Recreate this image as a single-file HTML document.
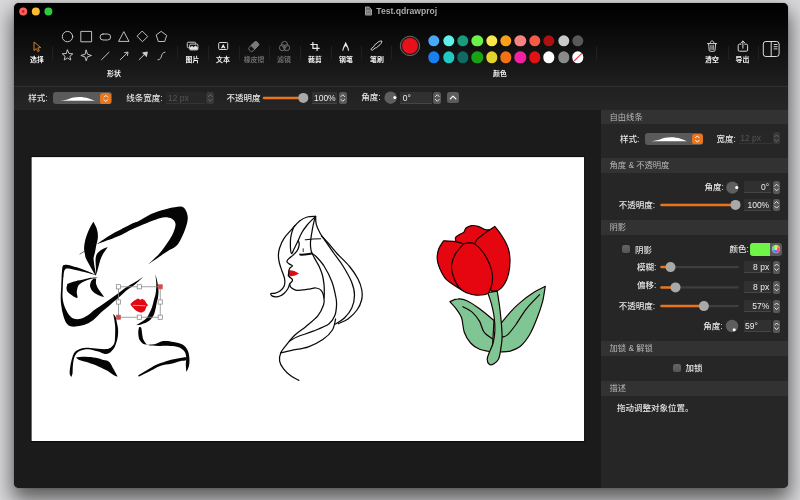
<!DOCTYPE html>
<html lang="zh-CN">
<head>
<meta charset="utf-8">
<title>Test.qdrawproj</title>
<style>
*{box-sizing:border-box;margin:0;padding:0}
html,body{width:800px;height:500px;overflow:hidden}
body{background:#d9d9db;font-family:"Liberation Sans","Noto Sans CJK SC",sans-serif;font-size:8px;color:#e6e6e6;position:relative}
.abs,.win *{position:absolute}
.win{position:absolute;left:14.3px;top:2.5px;width:773.8px;height:485.8px;border-radius:5px;background:#1b1b1b;overflow:hidden;
 box-shadow:0 10px 20px 2px rgba(0,0,0,.58),0 0 2px rgba(0,0,0,.25)}
/* coordinates inside .win are page coords shifted by (-14.5,-2.5); use wrapper to restore page coords */
.pg{left:-14.3px;top:-2.5px;width:800px;height:500px;will-change:transform}
.toolbar{left:0;top:0;width:800px;height:86px;background:linear-gradient(#000 0%,#030303 18%,#101010 55%,#1f1f1f 100%)}
.tbline{left:0;top:85.5px;width:800px;height:1px;background:#303030}
.optbar{left:0;top:86.5px;width:800px;height:23.5px;background:linear-gradient(#202020,#262626)}
.optline{left:0;top:109.5px;width:800px;height:1px;background:#111}
.canvasbg{left:0;top:110px;width:601.3px;height:390px;background:#1b1b1b}
.paper{left:32px;top:157.5px;width:552px;height:283.5px;background:#fff}
.panel{left:601.3px;top:110px;width:187px;height:380px;background:#262626}
.hdr{left:601.3px;width:187px;height:14.6px;background:#323232;color:#b8b8b8;font-size:8.3px;line-height:14.6px;padding-left:8.2px}
.lbl{font-size:8.5px;line-height:10px;white-space:nowrap;color:#e4e4e4;font-weight:500}
.tl{font-size:6.9px;line-height:9px;font-weight:bold;color:#f2f2f2;white-space:nowrap;transform:translateX(-50%)}
.tl.dim{color:#6d6d6d}
.sep{width:1px;height:14.5px;top:45.5px;background:#202020}
.dot{width:11.4px;height:11.4px;border-radius:50%;transform:translate(-50%,-50%)}
.field{height:12px;background:#303030;border-bottom:.8px solid #454545;color:#ececec;font-size:8.5px;line-height:13.8px;white-space:nowrap}
.field.r{width:27.6px;text-align:right;padding-right:2px}
.field.dis{color:#545454;background:#272727;border-color:#343434}
.stp{width:7.8px;height:12.5px;border-radius:2.6px;background:#585858}
.stp.dis{background:#383838}
.track{height:2.4px;border-radius:1px;background:#3c3c3c}
.fill{height:2.4px;border-radius:1px;background:#e8741c}
.knob{width:10px;height:10px;border-radius:50%;background:#a9a9a9;transform:translate(-50%,-50%)}
.dial{width:12px;height:12px;border-radius:50%;background:#5e5e5e;transform:translate(-50%,-50%)}
.cb{width:8.3px;height:8.3px;border-radius:2.2px;background:linear-gradient(#646464,#565656)}
.dd{height:12.2px;border-radius:3px;background:#5a5a5a}
.ddb{width:10.8px;height:10.6px;border-radius:2.6px;background:#e8761e}
svg{overflow:visible}
</style>
</head>
<body>
<div class="win"><div class="pg">
<div class="toolbar"></div>
<div class="tbline"></div>
<div class="optbar"></div>
<div class="optline"></div>
<div class="canvasbg"></div>
<div class="panel"></div>

<!-- TITLE -->
<div class="abs" style="left:376.3px;top:5.5px;font-size:8.6px;line-height:10px;font-weight:bold;color:#a9a9a9;white-space:nowrap">Test.qdrawproj</div>

<!-- TOOLBAR LABELS -->
<div class="tl" style="left:37px;top:54.5px">选择</div>
<div class="tl" style="left:114px;top:68.5px">形状</div>
<div class="tl" style="left:192.5px;top:54.5px">图片</div>
<div class="tl" style="left:223px;top:54.5px">文本</div>
<div class="tl dim" style="left:254px;top:54.5px">橡皮擦</div>
<div class="tl dim" style="left:284px;top:54.5px">滤镜</div>
<div class="tl" style="left:315px;top:54.5px">裁剪</div>
<div class="tl" style="left:346px;top:54.5px">钢笔</div>
<div class="tl" style="left:377px;top:54.5px">笔刷</div>
<div class="tl" style="left:500px;top:68.5px">颜色</div>
<div class="tl" style="left:712px;top:55px">清空</div>
<div class="tl" style="left:742.5px;top:55px">导出</div>

<div class="sep" style="left:52px"></div>
<div class="sep" style="left:176.5px"></div>
<div class="sep" style="left:208px"></div>
<div class="sep" style="left:238.5px"></div>
<div class="sep" style="left:268.5px"></div>
<div class="sep" style="left:299.5px"></div>
<div class="sep" style="left:330.5px"></div>
<div class="sep" style="left:361px"></div>
<div class="sep" style="left:391px"></div>
<div class="sep" style="left:596px"></div>
<div class="sep" style="left:727.5px"></div>
<div class="sep" style="left:758px"></div>

<!-- COLOR DOTS -->
<div class="dot" style="left:434.1px;top:41.1px;background:#4aa8f8"></div>
<div class="dot" style="left:434.1px;top:57.2px;background:#1a80f2"></div>
<div class="dot" style="left:448.5px;top:41.1px;background:#5ef0ea"></div>
<div class="dot" style="left:448.5px;top:57.2px;background:#20c9c2"></div>
<div class="dot" style="left:462.9px;top:41.1px;background:#1b9b7d"></div>
<div class="dot" style="left:462.9px;top:57.2px;background:#0f6a62"></div>
<div class="dot" style="left:477.2px;top:41.1px;background:#6cf04a"></div>
<div class="dot" style="left:477.2px;top:57.2px;background:#18a316"></div>
<div class="dot" style="left:491.6px;top:41.1px;background:#fbe84e"></div>
<div class="dot" style="left:491.6px;top:57.2px;background:#e2d22e"></div>
<div class="dot" style="left:506.0px;top:41.1px;background:#f8a01c"></div>
<div class="dot" style="left:506.0px;top:57.2px;background:#f07210"></div>
<div class="dot" style="left:520.4px;top:41.1px;background:#f88282"></div>
<div class="dot" style="left:520.4px;top:57.2px;background:#f220a2"></div>
<div class="dot" style="left:534.8px;top:41.1px;background:#f85a48"></div>
<div class="dot" style="left:534.8px;top:57.2px;background:#e01214"></div>
<div class="dot" style="left:549.1px;top:41.1px;background:#b00f12"></div>
<div class="dot" style="left:549.1px;top:57.2px;background:#ffffff"></div>
<div class="dot" style="left:563.5px;top:41.1px;background:#c9c9c9"></div>
<div class="dot" style="left:563.5px;top:57.2px;background:#8a8a8a"></div>
<div class="dot" style="left:577.9px;top:41.1px;background:#585858"></div>
<div class="dot" style="left:577.9px;top:57.2px;background:#ffffff"></div>

<!-- OPTIONS BAR -->
<div class="lbl" style="left:28.2px;top:93.3px">样式:</div>
<div class="dd" style="left:53.2px;top:92.2px;width:58.6px"></div>
<div class="ddb" style="left:100.4px;top:93px"></div>
<div class="lbl" style="left:126.2px;top:93.3px">线条宽度:</div>
<div class="field dis" style="left:166px;top:92px;width:39px;padding-left:2px">12 px</div>
<div class="stp dis" style="left:206.4px;top:91.7px"></div>
<div class="lbl" style="left:226.600px;top:93.3px">不透明度</div>
<div class="field" style="left:312.300px;top:92px;width:25px;text-align:center">100%</div>
<div class="stp" style="left:338.900px;top:91.7px"></div>
<div class="lbl" style="left:361.200px;top:92.300px">角度:</div>
<div class="field" style="left:400px;top:92px;width:32px;padding-left:2.800px">0°</div>
<div class="stp" style="left:433.400px;top:91.700px"></div>
<div class="abs" style="left:447.300px;top:91.800px;width:11.500px;height:11.400px;border-radius:2.500px;background:#5c5c5c"></div>

<!-- RIGHT PANEL -->
<div class="hdr" style="top:109.900px">自由线条</div>
<div class="lbl" style="left:620px;top:133.700px">样式:</div>
<div class="dd" style="left:645px;top:132.800px;width:58.300px"></div>
<div class="ddb" style="left:691.900px;top:133.600px"></div>
<div class="lbl" style="left:716.500px;top:133.700px">宽度:</div>
<div class="field dis" style="left:738.500px;top:132.400px;width:33px;padding-left:1.700px">12 px</div>
<div class="stp dis" style="left:772.700px;top:131.900px"></div>

<div class="hdr" style="top:158.200px">角度 &amp; 不透明度</div>
<div class="lbl" style="left:704.500px;top:182.300px">角度:</div>
<div class="field r" style="left:743.600px;top:181.200px">0°</div>
<div class="stp" style="left:772.700px;top:181.200px"></div>
<div class="lbl" style="left:618.800px;top:200.400px">不透明度:</div>
<div class="field r" style="left:743.600px;top:198.800px">100%</div>
<div class="stp" style="left:772.700px;top:198.500px"></div>

<div class="hdr" style="top:220.100px">阴影</div>
<div class="cb" style="left:622px;top:245.200px"></div>
<div class="lbl" style="left:635px;top:244.500px">阴影</div>
<div class="lbl" style="left:729.600px;top:244.400px">颜色:</div>
<div class="abs" style="left:750.400px;top:243px;width:31.600px;height:12.600px;border-radius:3px;background:#5a5a5a"></div>
<div class="abs" style="left:750.400px;top:243px;width:19.300px;height:12.600px;border-radius:3px 0 0 3px;background:#6ef548"></div>
<div class="abs" style="left:775.700px;top:249.300px;width:7px;height:7px;border-radius:50%;transform:translate(-50%,-50%);background:conic-gradient(from 90deg,#ff3b3b,#ff3bd8,#7a4bff,#3b9bff,#3bf0d0,#5bff4b,#f4ff3b,#ffa03b,#ff3b3b);box-shadow:0 0 0 .7px #d8d8d8"></div>
<div class="abs" style="left:775.700px;top:249.300px;width:3px;height:3px;border-radius:50%;transform:translate(-50%,-50%);background:radial-gradient(#fff,rgba(255,255,255,0))"></div>

<div class="lbl" style="left:637px;top:262.300px">模糊:</div>
<div class="field r" style="left:743.600px;top:261px">8 px</div>
<div class="stp" style="left:772.700px;top:261px"></div>

<div class="lbl" style="left:637px;top:280.200px">偏移:</div>
<div class="field r" style="left:743.600px;top:281.300px">8 px</div>
<div class="stp" style="left:772.700px;top:281.200px"></div>

<div class="lbl" style="left:618.800px;top:300.700px">不透明度:</div>
<div class="field r" style="left:743.600px;top:300px">57%</div>
<div class="stp" style="left:772.700px;top:300px"></div>

<div class="lbl" style="left:703.300px;top:320.800px">角度:</div>
<div class="field" style="left:743.600px;top:320px;width:27.600px;padding-left:1.500px">59°</div>
<div class="stp" style="left:772.700px;top:320px"></div>

<div class="hdr" style="top:341.200px">加锁 &amp; 解锁</div>
<div class="cb" style="left:673px;top:363.900px"></div>
<div class="lbl" style="left:685.500px;top:363.300px">加锁</div>
<div class="hdr" style="top:381px">描述</div>
<div class="lbl" style="left:617px;top:402.900px">拖动调整对象位置。</div>

<!-- ICONS + DRAWINGS -->
<svg class="abs" style="left:0;top:0" width="800" height="500" viewBox="0 0 800 500" id="art">
<!--ICONS-->
<!-- traffic lights -->
<circle cx="23.2" cy="11.5" r="4" fill="#f8605a"/><circle cx="23.2" cy="11.5" r="1.2" fill="#c01818"/>
<circle cx="35.8" cy="11.5" r="4" fill="#fabc30"/>
<circle cx="48.4" cy="11.5" r="4" fill="#30c840"/>
<!-- doc icon -->
<g fill="none" stroke="#a0a0a0" stroke-width="1"><path d="M365.5 7h3.6l2.4 2.4v5.6h-6z" fill="#6a6a6a"/><rect x="367" y="10.5" width="3" height="3" stroke-width=".7"/></g>
<!-- select cursor -->
<path d="M34 42v8.6l2.3-2 1.5 3 1.5-.7-1.5-3 3-.3z" fill="none" stroke="#e08a30" stroke-width=".9" stroke-linejoin="round"/>
<!-- shapes -->
<g fill="none" stroke="#d4d4d4" stroke-width=".9" stroke-linejoin="round" stroke-linecap="round">
<circle cx="67.5" cy="36.6" r="5.2"/>
<rect x="81.2" y="31.4" width="10.4" height="10.4"/>
<rect x="100" y="34" width="10.6" height="6" rx="3"/>
<path d="M124 32l5 9.4h-10z"/>
<path d="M142.5 31.3l5.2 5.2-5.2 5.2-5.2-5.2z"/>
<path d="M161.5 31.6l5.2 3.8-2 6.1h-6.4l-2-6.1z"/>
<path d="M67.5 50l1.5 3.5 3.8.3-2.9 2.5.9 3.7-3.3-2-3.3 2 .9-3.7-2.900-2.500 3.800-.300z"/>
<path d="M86.200 50.200l1.300 4 4 1.300-4 1.300-1.300 4-1.300-4-4-1.300 4-1.300z"/>
<path d="M101.600 59.600l7.400-7.300"/>
<path d="M120.400 59.600l7.400-7.300m-3.200.3l3.400-.5-.5 3.400"/>
<path d="M139.200 59.600l5.500-5.400"/>
<path d="M143 52.800l4.300-.8-.8 4.300z" fill="#d4d4d4"/>
<path d="M158 59.800c5 0 2-7.600 7-7.600"/>
</g>

<!-- image icon -->
<g fill="none" stroke="#e4e4e4" stroke-width=".9" stroke-linejoin="round">
<path d="M189.300 47.800h-.8a1.200 1.200 0 0 1-1.200-1.200v-3.200a1.200 1.200 0 0 1 1.200-1.200h6a1.200 1.200 0 0 1 1.200 1.200v.6"/>
<rect x="189.600" y="44.100" width="8.300" height="5.800" rx="1.200"/>
<path d="M190 49.600v-2.200l2-1.300 1.600 1.100 1.800-1.500 2.200 1.900v2z" fill="#e4e4e4" stroke-width=".4"/>
</g>
<!-- text icon -->
<rect x="218.700" y="42.500" width="9" height="7" rx="1.100" fill="none" stroke="#e4e4e4" stroke-width=".95"/>
<path d="M223.200 44.100l2.300 4.200h-1.300l-1-1.100-1 1.100h-1.300z" fill="#f0f0f0"/>
<!-- eraser -->
<g transform="rotate(-45 253.700 46.600)" stroke="#7a7a7a" stroke-width=".9" fill="none">
<rect x="248.200" y="44" width="11" height="5.200" rx="2"/>
<path d="M252.500 44h4.700a2 2 0 0 1 2 2v1.200a2 2 0 0 1-2 2h-4.700z" fill="#7a7a7a"/>
</g>
<!-- filter -->
<g fill="none" stroke="#7a7a7a" stroke-width=".9">
<circle cx="284.500" cy="44.400" r="3"/><circle cx="282.400" cy="47.700" r="3"/><circle cx="286.600" cy="47.700" r="3"/>
</g>
<!-- crop -->
<g fill="none" stroke="#e8e8e8" stroke-width="1.200">
<path d="M312.900 42v6.400h6.700"/><path d="M310.300 44.500h6.800v6.400"/>
</g>
<!-- pen -->
<path d="M345.700 41.700l2 4.300c.7 1.500 1.200 3 1.400 4.700h-1.100c-.3-2.200-1.100-3.800-2.300-4.600c-1.200.800-2 2.400-2.300 4.600h-1.100c.2-1.700.7-3.200 1.400-4.700z" fill="#e8e8e8"/>
<!-- brush -->
<g transform="rotate(-40 376.200 45.800)" fill="none" stroke="#e4e4e4" stroke-width=".85" stroke-linejoin="round">
<path d="M369.800 45.800c0-.7.300-1 1-1h3.200l1-.6h5c1.600 0 2.800.8 3.600 1.600c-.8.800-2 1.600-3.600 1.600h-5l-1-.6h-3.200c-.7 0-1-.3-1-1z"/>
</g>
<!-- big red -->
<circle cx="410" cy="45.900" r="9.700" fill="#1e1e1e" stroke="#8c8c8c" stroke-width=".7"/>
<circle cx="410" cy="45.900" r="7.900" fill="#e8111b"/>
<!-- no-color slash -->
<path d="M574.200 61l7.600-7.600" stroke="#e8485a" stroke-width="1.300" fill="none"/>
<!-- trash -->
<g fill="none" stroke="#e4e4e4" stroke-width=".9" stroke-linecap="round" stroke-linejoin="round">
<path d="M707.500 43.600h9.200"/><path d="M710.300 43.400c0-1.600.5-2.400 1.800-2.400s1.800.8 1.800 2.400"/>
<path d="M708.600 43.800l.6 6.500c.1.700.5 1 1.200 1h3.400c.7 0 1.100-.3 1.200-1l.6-6.500"/>
<path d="M710.800 45.500v4m1.300-4v4m1.300-4v4" stroke-width=".7"/>
</g>
<!-- export -->
<g fill="none" stroke="#e4e4e4" stroke-width=".95" stroke-linecap="round" stroke-linejoin="round">
<path d="M741 44.200h-1.600a1.200 1.200 0 0 0-1.200 1.200v4.600a1.200 1.200 0 0 0 1.200 1.200h7a1.200 1.200 0 0 0 1.200-1.200v-4.600a1.200 1.200 0 0 0-1.200-1.200h-1.600"/>
<path d="M742.900 48.200v-7m-2 1.800l2-2 2 2"/>
</g>
<!-- sidebar -->
<g fill="none" stroke="#e4e4e4" stroke-width=".95">
<rect x="763.300" y="41.500" width="15.800" height="15" rx="2.600"/><path d="M771.200 41.500v15"/>
<path d="M773.700 44.500h3.800m-3.800 2.200h3.800m-3.800 2.200h3.800" stroke-width=".9"/>
</g>
<!-- controls -->
<path d="M264.0 97.9H306.5" stroke="#3e3e3e" stroke-width="2.400" stroke-linecap="round" fill="none"/>
<path d="M264.0 97.9H303.3" stroke="#e8751d" stroke-width="2.500" stroke-linecap="round" fill="none"/>
<path d="M661.5 204.9H737.6" stroke="#3e3e3e" stroke-width="2.400" stroke-linecap="round" fill="none"/>
<path d="M661.5 204.9H735.5" stroke="#e8751d" stroke-width="2.500" stroke-linecap="round" fill="none"/>
<path d="M661.5 267.1H737.6" stroke="#3e3e3e" stroke-width="2.400" stroke-linecap="round" fill="none"/>
<path d="M661.5 267.1H670.5" stroke="#e8751d" stroke-width="2.500" stroke-linecap="round" fill="none"/>
<path d="M661.5 287.4H737.6" stroke="#3e3e3e" stroke-width="2.400" stroke-linecap="round" fill="none"/>
<path d="M661.5 287.4H675.5" stroke="#e8751d" stroke-width="2.500" stroke-linecap="round" fill="none"/>
<path d="M661.5 306.1H737.6" stroke="#3e3e3e" stroke-width="2.400" stroke-linecap="round" fill="none"/>
<path d="M661.5 306.1H703.9" stroke="#e8751d" stroke-width="2.500" stroke-linecap="round" fill="none"/>
<path d="M208.4 96.6l1.900-1.900 1.900 1.900M208.4 99.4l1.900 1.900 1.900-1.900" fill="none" stroke="#6c6c6c" stroke-width=".9" stroke-linecap="round" stroke-linejoin="round"/>
<path d="M340.9 96.6l1.900-1.900 1.900 1.900M340.9 99.4l1.900 1.900 1.900-1.900" fill="none" stroke="#f0f0f0" stroke-width=".9" stroke-linecap="round" stroke-linejoin="round"/>
<path d="M435.4 96.6l1.900-1.900 1.900 1.900M435.4 99.4l1.900 1.900 1.900-1.900" fill="none" stroke="#f0f0f0" stroke-width=".9" stroke-linecap="round" stroke-linejoin="round"/>
<path d="M774.7 136.8l1.900-1.900 1.900 1.900M774.7 139.6l1.900 1.900 1.900-1.900" fill="none" stroke="#6c6c6c" stroke-width=".9" stroke-linecap="round" stroke-linejoin="round"/>
<path d="M774.7 186.1l1.900-1.900 1.900 1.900M774.7 188.9l1.900 1.900 1.900-1.900" fill="none" stroke="#f0f0f0" stroke-width=".9" stroke-linecap="round" stroke-linejoin="round"/>
<path d="M774.7 203.4l1.900-1.900 1.900 1.900M774.7 206.2l1.900 1.900 1.900-1.900" fill="none" stroke="#f0f0f0" stroke-width=".9" stroke-linecap="round" stroke-linejoin="round"/>
<path d="M774.7 265.9l1.900-1.900 1.900 1.900M774.7 268.7l1.900 1.900 1.900-1.900" fill="none" stroke="#f0f0f0" stroke-width=".9" stroke-linecap="round" stroke-linejoin="round"/>
<path d="M774.7 286.1l1.900-1.900 1.900 1.900M774.7 288.9l1.900 1.900 1.900-1.900" fill="none" stroke="#f0f0f0" stroke-width=".9" stroke-linecap="round" stroke-linejoin="round"/>
<path d="M774.7 304.9l1.900-1.900 1.900 1.900M774.7 307.7l1.900 1.900 1.900-1.900" fill="none" stroke="#f0f0f0" stroke-width=".9" stroke-linecap="round" stroke-linejoin="round"/>
<path d="M774.7 324.9l1.900-1.900 1.900 1.900M774.7 327.7l1.900 1.900 1.900-1.900" fill="none" stroke="#f0f0f0" stroke-width=".9" stroke-linecap="round" stroke-linejoin="round"/>
<path d="M104.0 97.1l1.800-1.800 1.800 1.800M104.0 99.7l1.800 1.800 1.800-1.800" fill="none" stroke="#fff" stroke-width=".95" stroke-linecap="round" stroke-linejoin="round"/>
<path d="M695.5 137.7l1.800-1.800 1.800 1.800M695.5 140.3l1.800 1.800 1.800-1.800" fill="none" stroke="#fff" stroke-width=".95" stroke-linecap="round" stroke-linejoin="round"/>
<path d="M59.8 100.8C68.8 100.2 70.0 96.9 79.0 96.9C87.0 96.9 90.2 99.2 95.2 100.8z" fill="#fff"/>
<path d="M651.5 141.2C660.5 140.6 661.8 137.3 670.8 137.3C678.8 137.3 682.0 139.6 687.0 141.2z" fill="#fff"/>
<circle cx="303.300" cy="97.9" r="5" fill="#a9a9a9"/>
<circle cx="735.500" cy="204.900" r="5" fill="#a9a9a9"/>
<circle cx="670.500" cy="267.100" r="5" fill="#a9a9a9"/>
<circle cx="675.500" cy="287.400" r="5" fill="#a9a9a9"/>
<circle cx="703.900" cy="306.100" r="5" fill="#a9a9a9"/>
<circle cx="390.600" cy="97.700" r="6.200" fill="#5e5e5e"/>
<circle cx="732.400" cy="187.600" r="6.200" fill="#5e5e5e"/>
<circle cx="732" cy="326" r="6.200" fill="#5e5e5e"/>
<circle cx="394.800" cy="97.600" r="1.500" fill="#fff"/>
<circle cx="736.700" cy="187.600" r="1.500" fill="#fff"/>
<circle cx="734.200" cy="329.700" r="1.500" fill="#fff"/>
<path d="M450.300 98.900l2.750-2.750 2.750 2.750" fill="none" stroke="#fff" stroke-width="1.200" stroke-linecap="round" stroke-linejoin="round"/>
<!--/ICONS-->
<rect x="30.700" y="156.200" width="554.300" height="285.900" fill="#0c0c0c"/>
<rect x="31.600" y="157.100" width="552.450" height="283.900" fill="#fff"/>
<!--ART-->
<g id="tulip">
<path d="M545.3 286.3C543.3 287.3 537.9 289.7 533.6 292.6C529.2 295.4 523.2 299.9 519.2 303.4C515.1 306.8 512.3 310.0 509.3 313.3C506.3 316.6 502.5 321.5 501.2 323.2C501.0 328.0 500.4 347.2 500.3 352.0C501.9 351.8 506.7 352.1 510.2 351.1C513.6 350.0 517.7 348.5 521.0 345.7C524.3 342.8 527.3 338.6 530.0 334.0C532.7 329.3 535.1 323.2 537.2 317.8C539.3 312.4 541.2 306.8 542.6 301.6C543.9 296.3 544.8 288.8 545.3 286.3z" fill="#7fc694" stroke="#150101" stroke-width="1.2" stroke-linejoin="round"/>
<path d="M539.9 294.4C537.6 296.8 530.4 303.7 526.4 308.8C522.3 313.9 518.7 320.6 515.6 325.0C512.4 329.3 509.7 332.9 507.5 334.9C505.2 336.9 503.0 336.8 502.1 337.2" fill="none" stroke="#150101" stroke-width="1.2" stroke-linejoin="round"/>
<path d="M449.9 301.6C451.2 301.1 455.1 299.0 458.0 298.9C460.8 298.7 463.4 299.0 467.0 300.7C470.6 302.3 475.1 305.5 479.6 308.8C484.1 312.1 491.6 318.5 494.0 320.5C493.7 325.7 492.5 346.7 492.2 352.0C490.1 351.5 483.2 350.8 479.6 349.3C476.0 347.8 473.1 345.8 470.6 343.0C468.0 340.1 465.8 336.4 464.3 332.2C462.8 328.0 462.9 321.7 461.6 317.8C460.2 313.9 458.1 311.5 456.2 308.8C454.2 306.1 450.9 302.8 449.9 301.6z" fill="#7fc694" stroke="#150101" stroke-width="1.2" stroke-linejoin="round"/>
<path d="M462.5 306.6C464.1 307.6 469.5 309.9 472.4 312.4C475.2 314.9 477.6 318.1 479.6 321.4C481.5 324.7 481.8 329.2 484.1 332.2C486.3 335.2 491.6 338.2 493.1 339.4" fill="none" stroke="#150101" stroke-width="1.2" stroke-linejoin="round"/>
<path d="M487.7 292.6C488.3 294.4 490.2 299.5 491.3 303.4C492.3 307.3 493.4 311.5 494.0 316.0C494.6 320.5 495.0 325.9 494.9 330.4C494.7 334.9 494.0 339.4 493.1 343.0C492.2 346.6 490.5 349.3 489.5 352.0C488.5 354.7 487.2 357.1 487.2 359.2C487.2 361.3 488.4 363.8 489.5 364.6C490.6 365.3 492.5 364.6 494.0 363.7C495.5 362.8 497.4 361.1 498.5 359.2C499.5 357.2 499.7 355.6 500.3 352.0C500.9 348.4 501.9 342.7 502.1 337.6C502.2 332.5 501.6 326.8 501.2 321.4C500.7 316.0 500.1 310.2 499.4 305.2C498.7 300.2 497.6 293.5 497.2 291.2C495.6 291.4 489.3 292.4 487.7 292.6z" fill="#7fc694" stroke="#150101" stroke-width="1.2" stroke-linejoin="round"/>
<path d="M455.6 240.0C455.6 239.5 454.9 238.2 455.6 237.3C456.3 236.3 458.2 235.3 459.6 234.4C461.0 233.5 462.9 233.2 463.9 232.2C465.0 231.1 464.7 229.1 466.0 228.0C467.3 226.9 469.6 225.9 471.6 225.6C473.6 225.3 475.7 225.7 478.0 226.4C480.3 227.1 483.2 229.0 485.2 229.6C487.2 230.2 489.2 229.9 490.0 229.9C488.0 232.5 483.2 243.0 478.0 245.6C472.8 248.2 462.5 246.5 458.8 245.6C455.1 244.7 456.1 240.9 455.6 240.0z" fill="#e6060f" stroke="#150101" stroke-width="1.2" stroke-linejoin="round"/>
<path d="M443.6 240.8C442.8 242.1 439.9 245.9 438.8 248.8C437.7 251.7 437.1 255.2 437.2 258.4C437.3 261.6 438.1 264.5 439.6 268.0C441.1 271.5 443.1 276.0 446.0 279.2C448.9 282.4 453.7 284.9 457.2 287.2C460.7 289.5 465.2 291.9 466.8 292.8C468.7 288.7 478.4 276.1 478.0 268.0C477.6 259.9 466.7 248.0 464.4 244.0C462.9 243.6 459.1 242.1 455.6 241.6C452.1 241.1 445.6 240.9 443.6 240.8z" fill="#e6060f" stroke="#150101" stroke-width="1.2" stroke-linejoin="round"/>
<path d="M494.8 226.4C496.0 228.0 499.7 232.3 502.0 236.0C504.3 239.7 507.1 244.5 508.4 248.8C509.7 253.1 510.0 257.3 510.0 261.6C510.0 265.9 509.3 270.7 508.4 274.4C507.5 278.1 506.0 281.4 504.4 284.0C502.8 286.6 500.9 288.9 498.8 290.1C496.7 291.3 492.8 291.0 491.6 291.2C489.3 287.3 480.8 275.9 478.0 268.0C475.2 260.1 475.3 248.0 474.8 244.0C475.2 243.2 475.6 240.9 477.2 239.2C478.8 237.5 481.5 235.7 484.4 233.6C487.3 231.5 493.1 227.6 494.8 226.4z" fill="#e6060f" stroke="#150101" stroke-width="1.2" stroke-linejoin="round"/>
<path d="M463.9 243.7C464.8 243.5 467.4 242.8 469.2 242.9C471.0 242.9 472.5 242.5 474.8 244.0C477.1 245.5 480.4 248.8 482.8 252.0C485.2 255.2 487.6 259.5 489.2 263.2C490.8 266.9 492.0 270.7 492.4 274.4C492.8 278.1 492.4 282.4 491.6 285.6C490.8 288.8 490.1 292.0 487.6 293.6C485.1 295.2 479.9 295.3 476.4 295.2C472.9 295.1 469.7 294.1 466.8 292.8C463.9 291.5 461.1 290.0 458.8 287.2C456.5 284.4 454.4 279.7 453.2 276.0C452.0 272.3 451.2 268.5 451.6 264.8C452.0 261.1 453.5 257.1 455.6 253.6C457.7 250.1 462.5 245.3 463.9 243.7z" fill="#e6060f" stroke="#150101" stroke-width="1.2" stroke-linejoin="round"/>
</g>

<path d="M289.200 270.200C292 270 295.500 271 299.100 273.600C296 275.600 292.500 276.500 289.200 276.100C288.500 274.500 288.500 272 289.200 270.200z" fill="#e00a14"/>
<g id="girl" fill="none" stroke="#0a0a0a" stroke-linecap="round" stroke-linejoin="round">
<path d="M315.6 216.4C314.2 216.5 309.9 216.2 307.2 217.0C304.5 217.8 302.2 218.9 299.6 220.9C297.1 222.9 294.5 226.3 291.9 229.2C289.3 232.1 286.2 235.1 284.2 238.2C282.1 241.3 280.6 245.0 279.6 248.0C278.6 251.0 278.4 253.5 278.4 256.0C278.4 258.5 278.8 260.5 279.4 263.0C280.0 265.5 281.1 268.3 282.0 271.0C282.9 273.7 284.2 276.5 284.6 279.0C285.0 281.5 285.0 284.0 284.2 286.0C283.4 288.0 281.6 289.8 280.0 291.0C278.4 292.2 276.0 292.9 274.5 293.3C273.0 293.7 271.5 293.2 271.0 293.6C270.5 294.0 270.9 295.1 271.6 295.6C272.4 296.1 274.1 296.7 275.5 296.8C276.9 296.9 278.5 296.6 280.0 296.0C281.5 295.4 283.2 294.2 284.5 293.0C285.8 291.8 287.1 290.0 288.0 288.5C288.9 287.0 289.3 284.8 289.6 284.0" stroke-width="1.25"/>
<path d="M315.6 216.4C314.2 217.8 309.5 222.2 307.2 225.0C304.9 227.8 303.2 230.2 301.6 233.0C300.0 235.8 298.9 239.1 297.6 241.8C296.3 244.5 295.0 247.0 294.0 249.0C293.0 251.0 292.2 254.0 291.6 253.6C291.0 253.2 290.5 249.4 290.4 246.6C290.3 243.8 290.3 240.1 290.8 237.0C291.3 233.9 292.5 230.1 293.2 228.2C293.9 226.3 294.7 226.0 295.0 225.6" stroke-width="1.25"/>
<path d="M298.3 240.6C298.4 241.1 299.1 242.5 299.2 243.5C299.3 244.5 299.1 245.4 298.8 246.6C298.5 247.8 298.2 249.1 297.2 250.6C296.2 252.1 294.2 254.1 292.8 255.4C291.4 256.7 289.8 257.6 288.8 258.6C287.8 259.6 286.9 260.5 286.9 261.4C286.9 262.2 288.0 263.0 288.9 263.7C289.8 264.4 292.3 265.1 292.5 265.8C292.7 266.5 290.6 267.1 290.0 267.9C289.4 268.7 289.1 269.6 288.9 270.5C288.7 271.4 288.7 272.7 288.6 273.6C288.5 274.5 288.2 275.1 288.4 275.7C288.6 276.3 289.6 276.9 289.8 277.2" stroke-width="1.25"/>
<path d="M289.8 277.2C290.2 277.6 292.0 278.8 292.4 279.5C292.8 280.2 292.4 280.7 292.0 281.4C291.6 282.1 290.2 283.1 289.9 283.8C289.6 284.5 289.8 284.9 290.0 285.5C290.2 286.1 290.1 286.8 291.2 287.6C292.3 288.4 294.0 290.0 296.8 290.3C299.6 290.6 304.8 289.6 308.0 289.2C311.2 288.8 313.7 287.7 316.0 288.0C318.3 288.3 320.3 289.1 321.6 290.8C322.9 292.5 323.7 295.6 324.0 298.0C324.3 300.4 324.5 302.1 323.5 305.0C322.5 307.9 320.9 312.0 318.0 315.6C315.1 319.2 309.8 323.2 306.0 326.4C302.2 329.6 298.4 331.8 295.2 334.8C292.0 337.8 289.2 341.4 286.8 344.4C284.4 347.4 282.0 350.0 280.8 352.8C279.6 355.6 279.2 358.6 279.6 361.2C280.0 363.8 281.4 366.0 283.2 368.4C285.0 370.8 287.8 373.6 290.4 375.6C293.0 377.6 297.4 379.6 298.8 380.4" stroke-width="1.25"/>
<path d="M314.9 217.7C314.5 219.6 313.1 225.1 312.4 229.2C311.7 233.2 310.7 238.5 310.5 242.0C310.3 245.5 310.6 247.9 311.0 250.0C311.4 252.1 311.9 252.9 312.8 254.8C313.7 256.7 315.1 259.2 316.2 261.2C317.3 263.2 318.4 264.7 319.4 267.0C320.4 269.3 321.6 272.1 322.4 275.0C323.2 277.9 323.7 281.6 324.0 284.4C324.3 287.2 324.3 289.7 324.3 292.0C324.3 294.3 324.1 297.0 324.0 298.0" stroke-width="1.25"/>
<path d="M312.0 253.6C312.5 253.9 313.2 253.5 315.2 255.6C317.2 257.7 321.2 261.6 324.0 266.0C326.8 270.4 330.0 276.7 332.0 282.0C334.0 287.3 335.2 294.0 336.0 298.0C336.8 302.0 336.7 303.1 336.5 306.0C336.3 308.9 336.1 312.6 334.8 315.6C333.5 318.6 332.4 321.4 328.8 324.0C325.2 326.6 318.3 329.1 313.2 331.2C308.1 333.3 301.9 334.9 298.0 336.5C294.1 338.1 290.9 340.2 289.5 341.0" stroke-width="1.25"/>
<path d="M335.6 319.0C335.1 320.8 334.5 326.6 332.4 330.0C330.3 333.4 326.8 336.8 322.8 339.6C318.8 342.4 313.6 345.0 308.4 346.8C303.2 348.6 296.2 349.4 291.6 350.4C287.0 351.4 282.6 352.4 280.8 352.8" stroke-width="1.25"/>
<path d="M315.6 216.4C315.7 217.7 315.5 221.3 316.2 224.1C316.9 226.9 318.3 229.9 320.0 233.0C321.7 236.1 324.1 239.1 326.4 242.5C328.7 245.9 331.2 249.6 334.0 253.5C336.8 257.4 340.1 261.2 343.0 266.0C345.9 270.8 349.7 277.2 351.6 282.0C353.5 286.8 354.5 290.7 354.5 295.0C354.5 299.3 353.5 304.2 351.8 308.0C350.1 311.8 347.1 315.3 344.4 318.0C341.6 320.7 336.8 323.0 335.3 324.0" stroke-width="1.25"/>
<path d="M321.5 236.0C322.8 237.3 326.4 241.1 329.0 244.0C331.6 246.9 333.6 249.8 337.0 253.5C340.4 257.2 346.1 262.2 349.6 266.5C353.1 270.8 356.0 275.1 358.0 279.0C360.0 282.9 361.2 286.5 361.8 290.0C362.4 293.5 362.4 296.7 361.6 300.0C360.8 303.3 359.3 306.8 357.0 310.0C354.7 313.2 351.1 316.7 348.0 319.0C344.9 321.3 340.0 322.8 338.4 323.6" stroke-width="1.25"/>
<path d="M305.3 239.8C306.6 239.7 310.4 239.2 313.0 239.0C315.6 238.8 319.4 238.8 320.7 238.8" stroke-width="1.1"/>
<path d="M300.2 254.6C300.8 254.6 302.1 254.8 304.0 254.6C305.9 254.4 310.4 253.7 311.7 253.5" stroke-width="2"/>
<path d="M303.2 248.8C303.2 249.3 303.2 251.1 303.2 251.6" stroke-width="0.9"/>
</g>

<g id="hat">
<path d="M96.2 244.5C98.2 243.1 104.2 238.8 108.4 236.2C112.6 233.6 116.9 231.4 121.2 229.2C125.5 227.0 131.1 224.2 134.0 222.8C136.9 221.4 135.8 222.4 138.8 220.9C141.8 219.4 147.5 215.6 151.8 213.7C156.1 211.8 160.9 210.5 164.7 209.4C168.5 208.3 171.9 207.6 174.8 207.2C177.7 206.8 180.2 206.3 182.0 206.8C183.8 207.3 184.6 208.2 185.6 210.1C186.6 212.0 187.8 215.0 187.8 218.0C187.8 221.0 186.7 224.7 185.6 228.1C184.5 231.5 182.9 235.2 181.3 238.2C179.7 241.2 178.5 243.9 176.2 246.1C173.9 248.3 170.5 249.4 167.6 251.2C164.7 253.0 162.2 254.7 159.0 256.9C155.8 259.1 150.1 263.0 148.3 264.2C150.1 262.5 155.8 257.6 159.0 254.0C162.2 250.4 165.2 246.1 167.6 242.5C170.0 238.9 172.1 235.5 173.4 232.4C174.7 229.3 175.8 226.1 175.5 223.8C175.2 221.5 173.7 219.9 171.9 218.8C170.1 217.7 167.3 217.2 164.7 217.3C162.1 217.4 159.7 218.3 156.1 219.5C152.5 220.7 147.2 222.8 143.1 224.5C139.0 226.2 135.2 227.8 131.6 229.5C127.9 231.2 125.1 233.2 121.2 235.0C117.3 236.8 112.6 238.5 108.4 240.1C104.2 241.7 98.2 243.8 96.2 244.5z" fill="#050505"/>
<path d="M93.4 221.8C92.7 223.0 90.5 226.3 89.2 229.2C87.9 232.1 86.2 236.2 85.4 239.4C84.6 242.6 84.1 245.8 84.1 248.4C84.0 251.0 84.8 253.3 85.1 255.0C85.4 256.7 85.2 256.9 86.0 258.6C86.8 260.3 88.1 262.6 89.6 265.2C91.0 267.8 93.6 272.5 94.7 274.2C95.8 275.9 96.0 275.2 96.2 275.4C96.0 274.2 95.2 270.1 94.8 268.0C94.4 265.9 94.2 264.4 94.0 262.7C93.8 261.0 93.4 259.8 93.6 258.0C93.8 256.2 94.6 254.2 95.0 252.2C95.4 250.2 95.7 248.4 96.2 245.8C96.7 243.2 97.8 239.7 97.9 236.9C98.0 234.1 97.7 231.7 96.9 229.2C96.2 226.7 94.0 223.0 93.4 221.8z" fill="#050505"/>
<path d="M107.8 247.1C106.6 247.6 102.5 249.1 100.7 250.3C98.9 251.5 97.7 252.8 96.8 254.2C95.9 255.6 95.8 257.0 95.6 259.0C95.4 261.0 95.7 263.3 95.8 266.0C95.9 268.7 96.2 273.5 96.3 275.0C96.5 274.2 97.1 271.8 97.6 270.0C98.1 268.2 98.7 265.8 99.2 264.0C99.7 262.2 99.9 261.0 100.5 259.5C101.1 258.0 101.4 256.9 102.6 254.8C103.8 252.7 106.9 248.4 107.8 247.1z" fill="#050505"/>
<path d="M79.600 254.300L84.800 251" stroke="#111" stroke-width=".6" fill="none"/>
<path d="M63.2 265.2C64.0 265.1 65.5 264.5 67.8 264.9C70.1 265.2 73.6 266.3 76.8 267.3C80.0 268.3 83.6 269.6 87.0 271.0C90.4 272.4 95.5 274.8 97.2 275.6C95.5 275.1 90.4 273.7 87.0 272.8C83.6 271.9 79.9 271.0 76.8 270.3C73.7 269.6 70.4 268.8 68.5 268.6C66.6 268.4 66.2 268.4 65.5 269.0C64.8 269.6 64.3 270.8 64.0 272.0C63.7 273.2 63.6 275.8 63.5 276.5C63.2 276.5 62.0 277.4 61.7 276.5C61.5 275.6 61.9 272.6 62.0 271.0C62.1 269.4 62.2 268.0 62.4 267.0C62.6 266.0 63.1 265.5 63.2 265.2z" fill="#050505"/>
<path d="M61.7 276.0C61.6 277.8 61.4 283.3 61.2 287.0C61.0 290.7 60.7 294.7 60.7 298.0C60.7 301.3 61.0 303.7 61.4 306.6C61.8 309.5 62.4 312.8 63.3 315.6C64.1 318.4 65.1 321.5 66.5 323.3C67.9 325.1 69.2 326.1 71.6 326.5C73.9 326.9 77.8 326.3 80.6 325.8C83.4 325.3 85.9 324.5 88.3 323.3C90.7 322.1 92.3 320.8 94.7 318.8C97.1 316.8 99.9 313.6 102.4 311.3C105.0 309.0 107.2 307.2 110.0 304.9C112.8 302.5 116.2 299.6 119.0 297.2C121.8 294.8 124.0 292.3 126.7 290.2C129.4 288.1 132.2 286.7 135.0 284.5C137.8 282.3 141.9 278.2 143.3 277.0C142.0 277.8 138.4 280.1 135.6 281.8C132.8 283.5 130.1 284.8 126.7 287.0C123.4 289.2 119.2 292.6 115.5 295.3C111.8 298.0 108.0 300.6 104.6 303.0C101.2 305.4 97.8 307.5 95.0 309.6C92.2 311.7 89.9 314.0 87.5 315.5C85.1 317.0 82.8 318.2 80.6 318.8C78.4 319.4 76.1 319.4 74.2 318.8C72.3 318.2 70.7 317.0 69.1 315.0C67.5 313.0 65.7 309.5 64.6 306.6C63.5 303.7 62.9 301.0 62.6 297.7C62.3 294.4 62.7 290.6 62.8 287.0C62.9 283.4 63.3 277.8 63.4 276.0C63.1 276.0 62.0 276.0 61.7 276.0z" fill="#050505"/>
<path d="M67.2 285.1C67.4 284.4 66.4 284.5 67.8 283.8C69.2 283.1 72.7 281.9 75.5 281.2C78.3 280.4 81.9 279.9 84.4 279.3C87.0 278.7 88.5 278.1 90.8 277.8C93.0 277.5 97.9 277.3 97.9 277.5C97.9 277.7 93.0 278.4 90.8 279.0C88.5 279.6 86.4 280.2 84.4 281.2C82.4 282.2 80.0 283.3 78.7 285.1C77.4 286.9 77.0 290.0 76.8 292.1C76.6 294.2 78.1 297.2 77.4 297.9C76.8 298.5 74.5 297.0 72.9 296.0C71.3 295.0 68.9 293.4 67.8 292.1C66.7 290.8 66.6 289.5 66.5 288.3C66.4 287.1 67.0 285.9 67.2 285.1z" fill="#050505"/>
<path d="M93.6 278.5C93.1 279.1 91.4 280.5 90.8 281.9C90.2 283.3 89.8 285.3 90.2 287.0C90.6 288.7 92.0 290.7 93.4 292.1C94.8 293.5 96.7 294.5 98.5 295.3C100.3 296.1 103.3 296.9 104.3 297.2C103.8 296.5 102.2 294.3 101.1 292.8C100.0 291.3 98.8 289.9 97.9 288.3C97.1 286.7 96.3 284.8 96.0 283.2C95.7 281.6 96.2 279.3 96.2 278.5C95.8 278.5 94.0 278.5 93.6 278.5z" fill="#050505"/>
<path d="M155.4 274.3C155.7 275.6 156.9 279.2 157.4 282.0C157.9 284.8 158.4 288.3 158.5 291.0C158.6 293.7 158.2 296.3 158.0 298.0C157.8 299.7 157.5 299.4 157.1 301.0C156.7 302.6 156.4 305.3 155.8 307.7C155.2 310.1 154.7 313.2 153.5 315.4C152.3 317.6 150.8 319.6 148.8 321.1C146.9 322.6 143.9 323.6 141.8 324.3C139.7 325.0 137.0 325.1 136.0 325.2C136.8 324.7 139.4 323.3 141.0 322.3C142.6 321.3 144.2 320.5 145.4 319.3C146.6 318.1 147.1 317.3 148.2 315.4C149.3 313.5 150.9 310.3 151.8 307.7C152.8 305.1 153.3 302.1 153.9 300.0C154.5 297.9 155.0 296.8 155.4 294.8C155.8 292.8 156.1 290.1 156.2 288.0C156.3 285.9 156.3 284.3 156.2 282.0C156.1 279.7 155.5 275.6 155.4 274.3z" fill="#050505"/>
<path d="M113.2 313.7C113.6 314.3 115.2 315.9 115.8 317.5C116.4 319.1 116.6 321.5 117.0 323.3C117.4 325.1 117.8 326.3 118.0 328.4C118.2 330.5 118.2 333.7 117.9 336.1C117.6 338.5 117.0 340.6 116.3 342.7C115.6 344.8 115.0 346.7 113.8 348.4C112.6 350.1 110.8 352.0 109.3 352.9C107.8 353.8 106.6 354.1 104.8 353.9C103.0 353.7 101.2 352.4 98.4 351.6C95.6 350.8 91.1 349.5 88.2 349.3C85.3 349.1 83.1 349.9 81.1 350.6C79.1 351.3 77.6 352.2 76.4 353.6C75.2 355.1 74.4 357.1 73.8 359.3C73.2 361.5 73.0 364.6 72.8 367.0C72.6 369.4 72.8 371.7 72.5 373.4C72.2 375.1 71.5 376.4 71.3 377.0C71.0 376.4 69.9 375.1 69.7 373.4C69.5 371.7 69.9 369.4 70.2 367.0C70.5 364.6 71.0 361.8 71.8 359.3C72.5 356.9 73.2 354.1 74.7 352.3C76.2 350.6 78.2 349.6 80.5 348.8C82.8 348.1 85.2 347.8 88.2 347.8C91.2 347.8 95.4 348.6 98.4 348.8C101.4 349.0 104.0 349.4 106.1 349.1C108.2 348.8 109.8 348.3 111.2 347.2C112.6 346.1 113.8 344.7 114.4 342.7C115.1 340.7 115.0 337.4 115.1 335.0C115.2 332.6 115.2 330.3 115.2 328.4C115.2 326.4 115.0 325.0 114.8 323.3C114.6 321.6 114.3 319.6 114.0 318.0C113.7 316.4 113.3 314.4 113.2 313.7z" fill="#050505"/>
<path d="M76.0 357.4C77.6 357.3 82.3 356.7 85.6 356.8C88.9 356.9 92.8 357.3 95.8 357.8C98.8 358.3 101.2 359.3 103.5 360.0C105.8 360.7 107.6 360.3 109.3 361.9C111.0 363.5 112.4 367.2 113.8 369.6C115.2 372.1 117.0 375.4 117.6 376.6C117.0 376.4 115.5 376.3 113.8 375.3C112.1 374.3 110.0 372.3 107.4 370.8C104.8 369.3 101.6 367.8 98.4 366.4C95.2 365.0 91.4 363.6 88.2 362.5C85.0 361.4 81.2 360.9 79.2 360.0C77.2 359.1 76.5 357.8 76.0 357.4z" fill="#050505"/>
<path d="M139.2 326.9C139.0 327.6 138.4 329.6 138.3 331.0C138.2 332.4 138.2 333.5 138.4 335.0C138.6 336.5 138.7 338.6 139.7 340.1C140.7 341.6 141.8 343.5 144.2 344.2C146.6 344.9 151.2 344.7 154.4 344.2C157.6 343.7 160.2 341.5 163.4 341.1C166.6 340.7 170.4 341.4 173.6 342.0C176.8 342.6 180.2 343.2 182.6 344.6C184.9 346.0 186.6 348.2 187.7 350.4C188.8 352.6 189.2 355.4 189.4 358.0C189.6 360.6 189.5 363.3 189.0 365.7C188.5 368.1 186.8 371.0 186.4 372.1C186.3 370.8 185.8 366.8 185.8 364.4C185.8 361.9 186.4 359.5 186.2 357.4C186.0 355.3 185.7 353.3 184.5 351.6C183.3 349.9 181.2 348.1 178.8 347.2C176.4 346.2 173.2 346.1 169.8 345.9C166.4 345.7 161.9 346.0 158.3 345.9C154.7 345.8 150.4 346.0 148.0 345.0C145.6 344.0 144.5 341.8 143.6 340.1C142.7 338.4 142.6 336.5 142.3 335.0C142.0 333.5 142.0 332.2 141.8 331.0C141.6 329.8 141.5 328.2 141.1 327.5C140.7 326.8 139.5 327.0 139.2 326.9z" fill="#050505"/>
<path d="M138.4 375.3C140.0 374.4 145.1 371.3 148.0 369.6C150.9 367.9 152.7 366.5 155.7 365.1C158.7 363.7 162.6 362.3 166.0 361.2C169.4 360.1 172.8 359.4 176.2 358.7C179.6 358.0 184.7 357.3 186.4 357.0C186.4 357.5 187.5 359.3 186.4 360.0C185.3 360.7 182.6 360.6 180.0 361.2C177.4 361.8 174.3 363.1 171.1 363.8C167.9 364.6 164.2 364.5 160.8 365.7C157.4 366.9 154.1 369.1 150.6 370.8C147.1 372.6 141.7 375.4 139.7 376.2C137.7 376.9 138.6 375.4 138.4 375.3z" fill="#050505"/>
<path d="M130.5 303.9C131.2 303.3 133.1 301.5 134.4 300.6C135.7 299.7 137.5 298.9 138.1 298.5C138.5 298.7 140.0 299.7 140.4 299.9C140.7 299.7 141.9 299.0 142.2 298.8C142.6 299.1 144.1 299.9 144.8 300.6C145.5 301.3 145.8 302.4 146.4 303.2C147.0 304.0 148.2 304.9 148.6 305.2C148.3 305.3 147.3 305.6 146.9 306.0C146.5 306.4 146.4 306.8 146.1 307.6C145.8 308.4 145.5 310.0 144.8 310.8C144.1 311.6 142.9 312.3 141.7 312.4C140.5 312.5 138.7 311.9 137.5 311.4C136.3 310.9 135.4 310.1 134.4 309.2C133.4 308.3 132.0 306.7 131.3 305.8C130.7 304.9 130.6 304.2 130.5 303.9z" fill="#e20a10"/>
<path d="M132.800 305.300L145.600 305.800" stroke="#fff" stroke-width=".65" stroke-opacity=".85" fill="none"/>
<rect x="118.4" y="286.8" width="41.79999999999998" height="30.399999999999977" fill="none" stroke="#8a8a8a" stroke-width=".8"/>
<rect x="116.3" y="284.7" width="4.200" height="4.200" fill="#fff" stroke="#7c7c7c" stroke-width=".7"/>
<rect x="137.2" y="284.7" width="4.200" height="4.200" fill="#fff" stroke="#7c7c7c" stroke-width=".7"/>
<rect x="158.1" y="284.7" width="4.200" height="4.200" fill="#d84a4a" stroke="#c06060" stroke-width=".7"/>
<rect x="116.3" y="299.9" width="4.200" height="4.200" fill="#fff" stroke="#7c7c7c" stroke-width=".7"/>
<rect x="158.1" y="299.9" width="4.200" height="4.200" fill="#fff" stroke="#7c7c7c" stroke-width=".7"/>
<rect x="116.3" y="315.1" width="4.200" height="4.200" fill="#d84a4a" stroke="#c06060" stroke-width=".7"/>
<rect x="137.2" y="315.1" width="4.200" height="4.200" fill="#fff" stroke="#7c7c7c" stroke-width=".7"/>
<rect x="158.1" y="315.1" width="4.200" height="4.200" fill="#fff" stroke="#7c7c7c" stroke-width=".7"/>
</g>

<!--/ART-->
</svg>
</div></div>
</body>
</html>
